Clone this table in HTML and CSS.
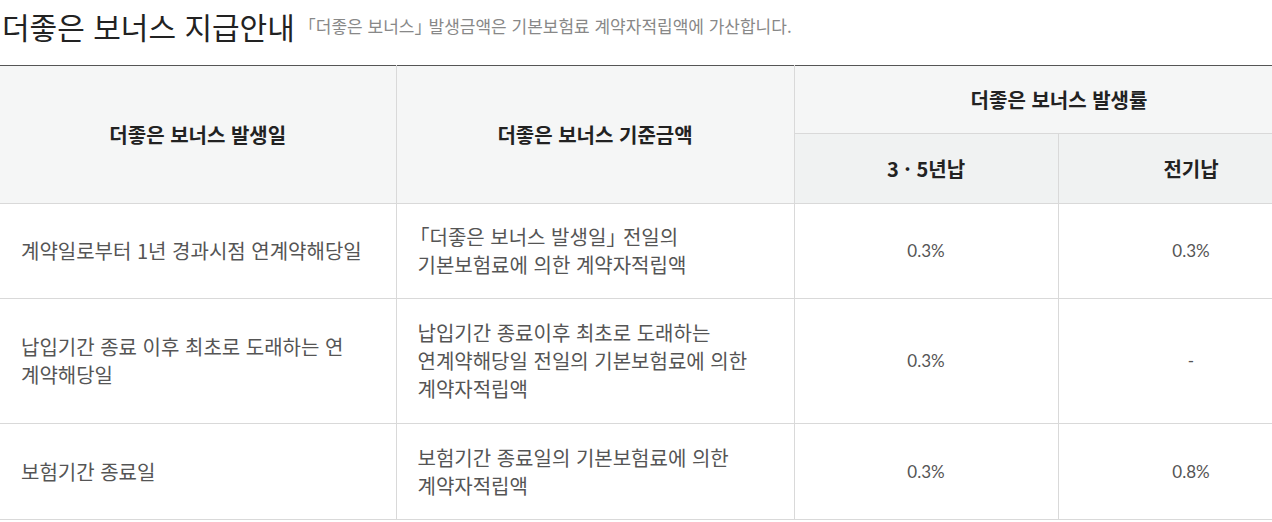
FILE: index.html
```html
<!DOCTYPE html>
<html lang="ko">
<head>
<meta charset="utf-8">
<link rel="stylesheet" href="styles.css">
</head>
<body>
<div class="page">
  <div class="title-row">
    <h2 class="title">더좋은 보너스 지급안내</h2>
    <p class="subtitle"><span class="lb">「</span>더좋은 보너스<span class="rb">」</span> 발생금액은 기본보험료 계약자적립액에 가산합니다.</p>
  </div>
  <table class="bonus">
    <colgroup>
      <col class="c1"><col class="c2"><col class="c3"><col class="c4">
    </colgroup>
    <thead>
      <tr class="h1">
        <th rowspan="2">더좋은 보너스 발생일</th>
        <th rowspan="2">더좋은 보너스 기준금액</th>
        <th colspan="2">더좋은 보너스 발생률</th>
      </tr>
      <tr class="h2">
        <th class="sub">3 · 5년납</th>
        <th class="sub">전기납</th>
      </tr>
    </thead>
    <tbody>
      <tr class="r1">
        <td class="txt">계약일로부터 1년 경과시점 연계약해당일</td>
        <td class="txt"><span class="lb">「</span>더좋은 보너스 발생일<span class="rb">」</span> 전일의<br>기본보험료에 의한 계약자적립액</td>
        <td class="num">0.3%</td>
        <td class="num">0.3%</td>
      </tr>
      <tr class="r2">
        <td class="txt">납입기간 종료 이후 최초로 도래하는 연<br>계약해당일</td>
        <td class="txt">납입기간 종료이후 최초로 도래하는<br>연계약해당일 전일의 기본보험료에 의한<br>계약자적립액</td>
        <td class="num">0.3%</td>
        <td class="num">-</td>
      </tr>
      <tr class="r3">
        <td class="txt">보험기간 종료일</td>
        <td class="txt">보험기간 종료일의 기본보험료에 의한<br>계약자적립액</td>
        <td class="num">0.3%</td>
        <td class="num">0.8%</td>
      </tr>
    </tbody>
  </table>
</div>
</body>
</html>
```

FILE: styles.css
```css
html, body {
  margin: 0;
  padding: 0;
  background: #fff;
  overflow: hidden;
}
body {
  font-family: "Noto Sans CJK KR", "Noto Sans", sans-serif;
  color: #222;
}
.page {
  width: 1324px;
}
.title-row {
  display: flex;
  align-items: center;
  height: 65px;
  padding-left: 2px;
  padding-bottom: 14px;
  box-sizing: border-box;
}
.title {
  margin: 0;
  font-size: 30px;
  font-weight: 400;
  color: #222;
  line-height: 40px;
}
.subtitle {
  margin: 0 0 0 4px;
  font-size: 17px;
  color: #888;
  line-height: 24px;
}
.rb { letter-spacing: -0.45em; }
.bonus {
  width: 1324px;
  border-collapse: collapse;
  table-layout: fixed;
  border-top: 1px solid #555;
}
.c1 { width: 396px; }
.c2 { width: 398px; }
.c3 { width: 264px; }
.c4 { width: 266px; }
.bonus th {
  background: #f5f6f6;
  font-size: 20px;
  font-weight: 700;
  color: #222;
  border: 1px solid #d9d9d9;
  border-top: none;
  padding: 0;
}
.bonus th:first-child { border-left: none; }
.bonus th.sub {
  background: #f0f2f2;
}
.h1 { height: 68px; }
.h2 { height: 70px; }
.bonus td {
  border: 1px solid #d9d9d9;
  font-size: 20px;
  color: #555;
  line-height: 28px;
  padding: 0 10px 0 21px;
  vertical-align: middle;
}
.bonus td:first-child { border-left: none; }
.bonus td.txt .lb { margin-left: -0.4em; }
.bonus td.num {
  text-align: center;
  font-family: "Lato", "Noto Sans CJK KR", sans-serif;
  font-size: 17px;
  color: #555;
  padding: 0;
}
.r1 { height: 95px; }
.r2 { height: 125px; }
.r3 { height: 96px; }
```
